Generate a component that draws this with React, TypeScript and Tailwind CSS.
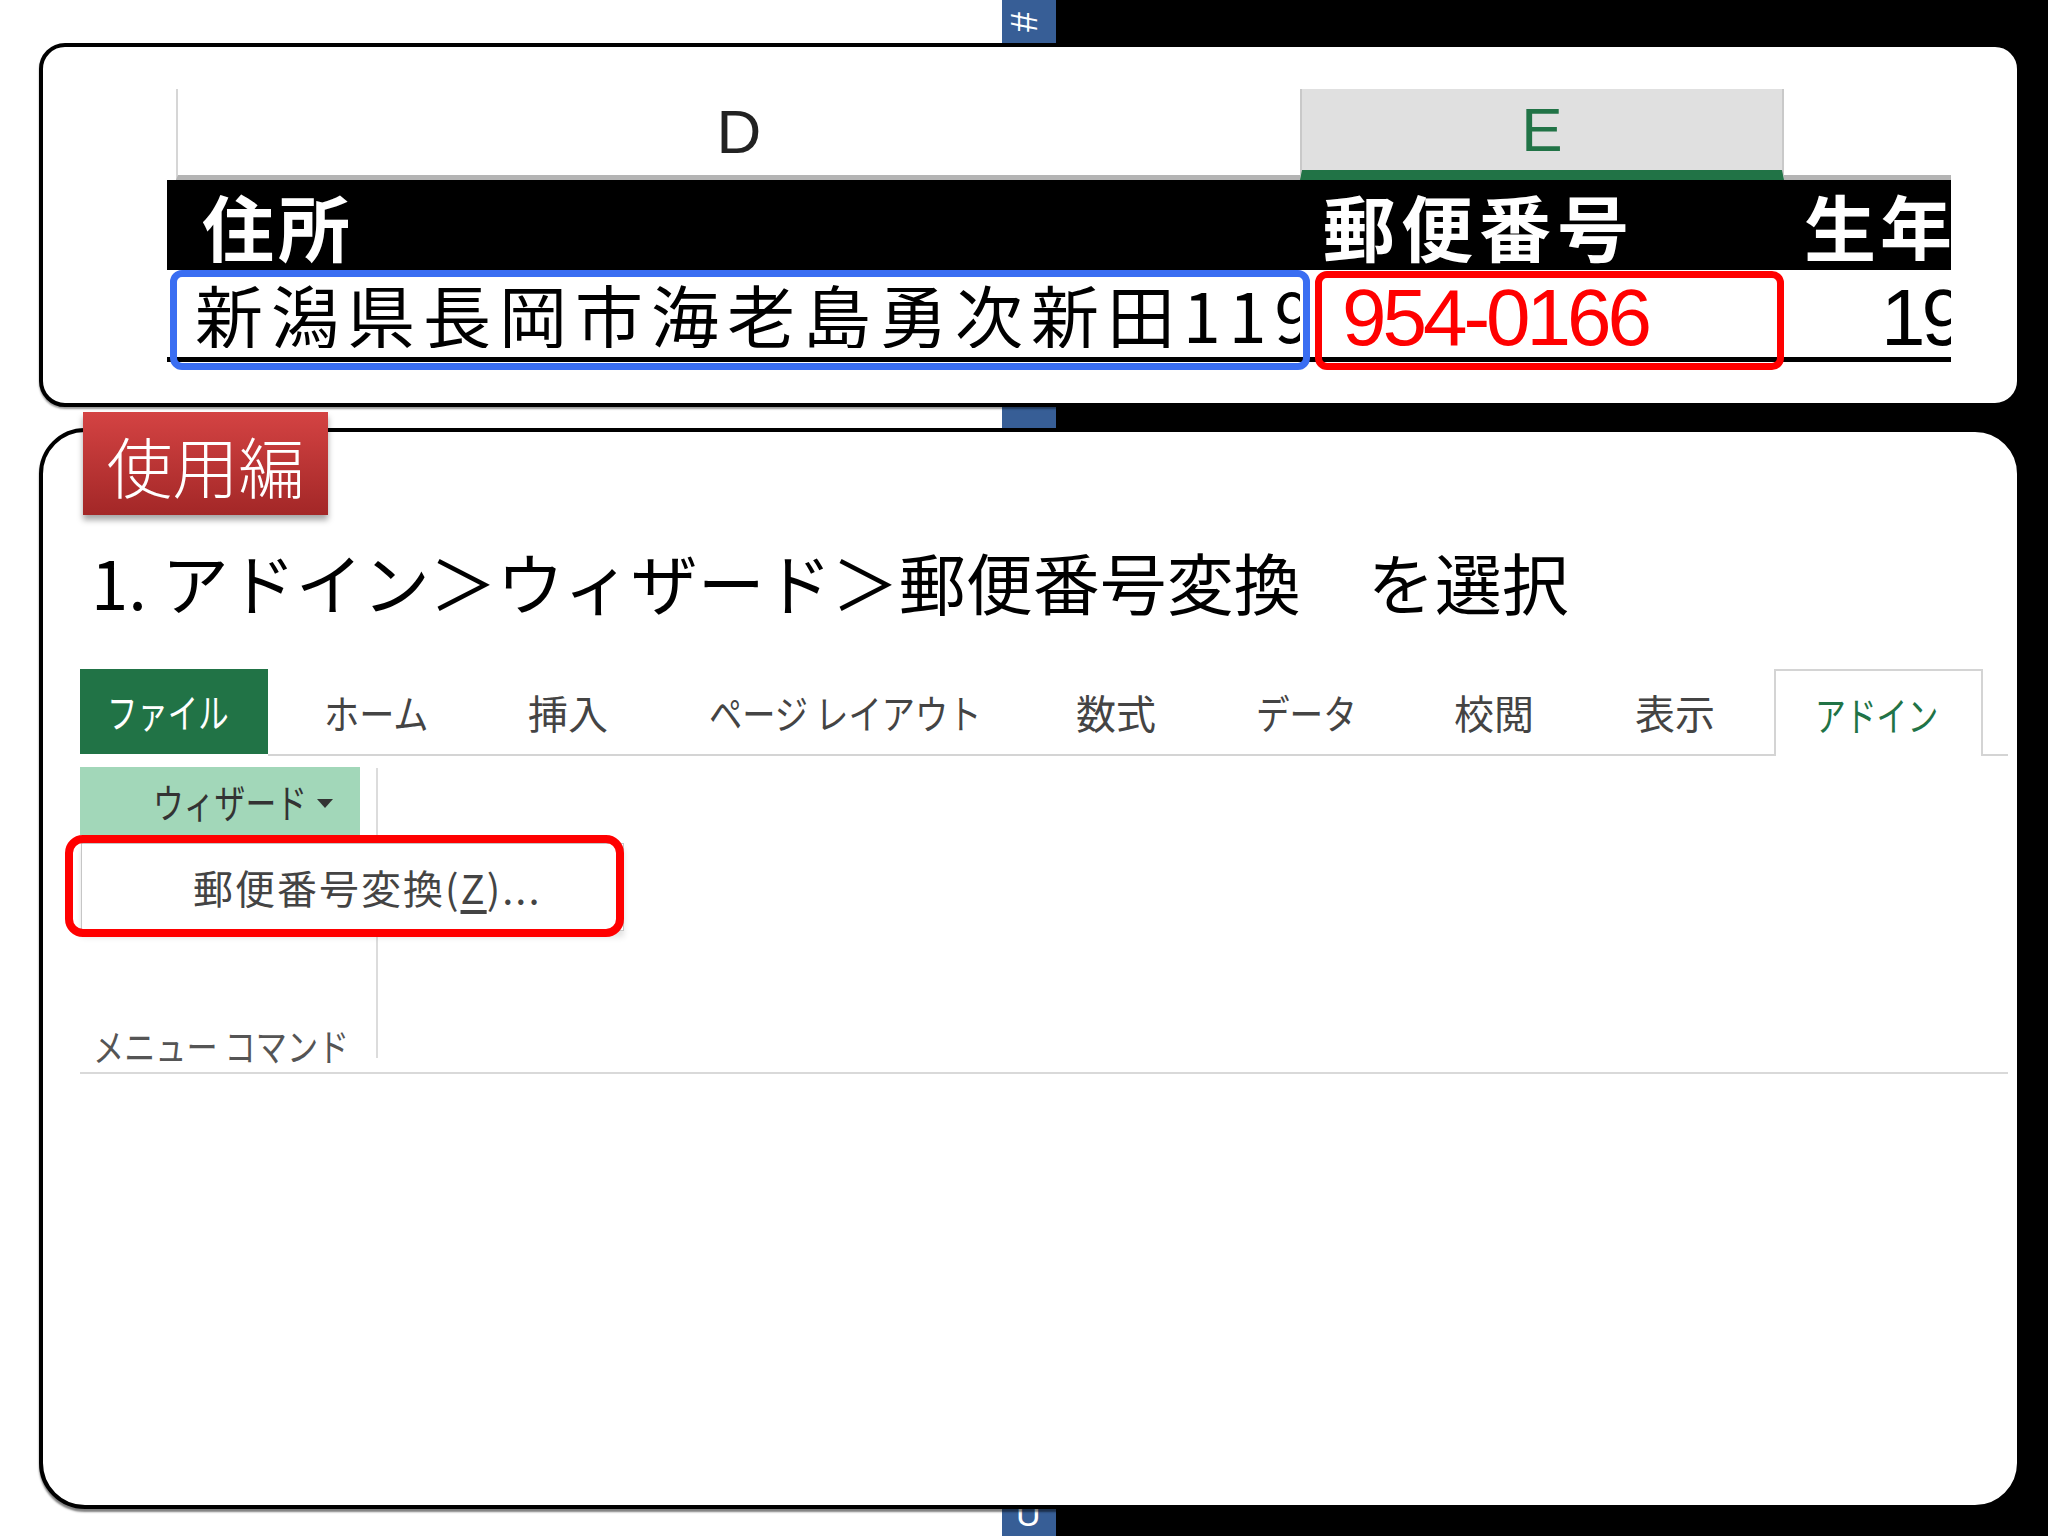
import React from 'react';

const jp = "font-['Noto_Sans_CJK_JP',sans-serif]";
const latin = "font-['Liberation_Sans',Arial,sans-serif]";

type Tab = { label: string; w: string; pl: string; fit: string };

// kana in the Excel UI font are condensed, so squeeze those labels
const tabs: Tab[] = [
  { label: 'ホーム', w: 'w-[210px]', pl: 'pl-[56px]', fit: '[transform:scaleX(0.88)]' },
  { label: '挿入', w: 'w-[181px]', pl: 'pl-[50px]', fit: '' },
  { label: 'ページ レイアウト', w: 'w-[368px]', pl: 'pl-[50px]', fit: '[transform:scaleX(0.83)]' },
  { label: '数式', w: 'w-[180px]', pl: 'pl-[49px]', fit: '' },
  { label: 'データ', w: 'w-[199px]', pl: 'pl-[49px]', fit: '[transform:scaleX(0.84)]' },
  { label: '校閲', w: 'w-[179px]', pl: 'pl-[48px]', fit: '' },
  { label: '表示', w: 'w-[189px]', pl: 'pl-[50px]', fit: '' },
];

function SheetPanel() {
  return (
    <div className="ml-[39px] w-[1982px] h-[364px] rounded-[26px] border-4 border-black bg-white shadow-[0_2px_2px_rgba(0,0,0,0.4)]">
      {/* column letters */}
      <div className={`mt-[42px] ml-[133px] flex h-[91px] ${latin}`}>
        <div className="w-[1124px] border-l-2 border-[#d6d6d6] border-b-[5px] border-b-[#b4b4b4] flex items-center justify-center">
          <span className="text-[62px] leading-none text-[#222]">D</span>
        </div>
        <div className="w-[484px] bg-[#e0e0e0] border-x-2 border-[#c9c9c9] border-b-[10px] border-b-[#217346] flex items-center justify-center">
          <span className="text-[62px] leading-none text-[#217346]">E</span>
        </div>
        <div className="w-[167px] border-b-[5px] border-[#b4b4b4]" />
      </div>

      {/* header row */}
      <div className={`ml-[124px] w-[1784px] h-[90px] bg-black flex items-center text-white font-bold text-[72px] leading-none whitespace-nowrap ${jp}`}>
        <div className="w-[1133px] pl-[35px] tracking-[4px]">住所</div>
        <div className="w-[484px] pl-[23px] tracking-[6px]">郵便番号</div>
        <div className="w-[167px] pl-[20px] overflow-hidden tracking-[4px]">生年月日</div>
      </div>

      {/* data row */}
      <div className="relative ml-[124px] w-[1784px] h-[92px] border-b-[5px] border-black flex items-center whitespace-nowrap">
        <div className={`w-[1133px] pl-[28px] overflow-hidden text-[68px] leading-none tracking-[8px] text-black ${jp}`}>
          新潟県長岡市海老島勇次新田1196
        </div>
        <div className={`w-[484px] pl-[42px] pt-[8px] text-[80px] leading-none tracking-[-4px] text-[#ff0000] ${latin}`}>
          954-0166
        </div>
        <div className={`w-[167px] pl-[97px] pt-[8px] overflow-hidden text-[80px] leading-none tracking-[-4px] text-black ${latin}`}>
          1985/04/12
        </div>
        <div className="absolute left-[3px] top-0 w-[1140px] h-[100px] border-[7px] border-[#3a6ef2] rounded-[12px]" />
        <div className="absolute left-[1148px] top-[1px] w-[469px] h-[99px] border-[7px] border-[#ff0000] rounded-[12px]" />
      </div>
    </div>
  );
}

function Ribbon() {
  return (
    <div className={jp}>
      {/* tabs */}
      <div className="mt-[55px] ml-[37px] w-[1928px] h-[87px] flex text-[40px] leading-none whitespace-nowrap">
        <div className="w-[188px] h-[85px] bg-[#217346] text-white pl-[27px] flex items-center border-b-2 border-[#217346]">
          <span className="inline-block origin-left [transform:scaleX(0.76)]">ファイル</span>
        </div>
        {tabs.map(t => (
          <div
            key={t.label}
            className={`${t.w} ${t.pl} h-full flex items-center border-b-2 border-[#d4d4d4] text-[#444]`}
          >
            <span className={`inline-block origin-left ${t.fit}`}>{t.label}</span>
          </div>
        ))}
        <div className="w-[209px] h-full flex items-center pl-[39px] border-2 border-b-0 border-[#d4d4d4] text-[#217346] bg-white">
          <span className="inline-block origin-left [transform:scaleX(0.77)]">アドイン</span>
        </div>
        <div className="flex-1 h-full border-b-2 border-[#d4d4d4]" />
      </div>

      {/* ribbon body */}
      <div className="ml-[37px] w-[1928px] h-[318px] border-b-2 border-[#d9d9d9] flex">
        <div className="relative w-[296px] h-full flex flex-col">
          <div className="mt-[11px] w-[280px] h-[68px] bg-[#a2d7b9] flex items-center pl-[73px] text-[40px] leading-none text-[#333] whitespace-nowrap">
            <span className="inline-block origin-left [transform:scaleX(0.77)]">ウィザード</span>
            <span className="-ml-[36px] mt-[4px] w-0 h-0 border-x-[8px] border-x-transparent border-t-[9px] border-t-[#333]" />
          </div>
          <div className="mt-auto pb-[8px] pl-[13px] text-[38px] leading-none text-[#555] whitespace-nowrap">
            <span className="inline-block origin-left [transform:scaleX(0.82)]">メニュー コマンド</span>
          </div>

          {/* dropdown menu */}
          <div className="absolute left-[1px] top-[87px] w-[543px] h-[88px] bg-white border border-[#c6c6c6] shadow-[0_6px_6px_rgba(0,0,0,0.12)] flex items-center pl-[111px] text-[40px] leading-none tracking-[2px] text-[#444] whitespace-nowrap">
            郵便番号変換(<span className="underline underline-offset-[6px]">Z</span>)...
          </div>
          <div className="absolute left-[-15px] top-[79px] w-[559px] h-[102px] border-[8px] border-[#ff0000] rounded-[18px]" />
        </div>
        <div className="w-[2px] mt-[12px] h-[290px] bg-[#dcdcdc]" />
      </div>
    </div>
  );
}

function UsagePanel() {
  return (
    <div className="relative mt-[21px] ml-[39px] w-[1982px] h-[1081px] rounded-[46px] border-4 border-black bg-white shadow-[0_3px_2px_rgba(0,0,0,0.5)]">
      <div className={`absolute left-[40px] top-[-20px] w-[245px] h-[103px] bg-linear-to-b from-[#d44343] to-[#a32727] shadow-[0_5px_6px_rgba(0,0,0,0.35)] flex items-center justify-center text-white text-[66px] font-light leading-none ${jp}`}>
        使用編
      </div>

      <div className={`mt-[115px] pl-[48px] text-[67px] leading-[67px] text-black whitespace-nowrap ${jp}`}>
        1. アドイン＞ウィザード＞郵便番号変換　を選択
      </div>

      <Ribbon />
    </div>
  );
}

export default function App() {
  return (
    <div className="w-[2048px] h-[1536px] overflow-hidden bg-[linear-gradient(to_right,#fff_1002px,#375e96_1002px,#375e96_1056px,#000_1056px)]">
      <div className="h-[43px] pl-[1013px] pt-[4px] overflow-hidden">
        <span className={`inline-block rotate-90 text-white text-[36px] leading-none ${latin}`}>#</span>
      </div>
      <SheetPanel />
      <UsagePanel />
      <div className="h-[27px] pl-[1016px] overflow-hidden">
        <span className={`block -mt-[12px] text-white text-[34px] leading-none ${latin}`}>U</span>
      </div>
    </div>
  );
}
